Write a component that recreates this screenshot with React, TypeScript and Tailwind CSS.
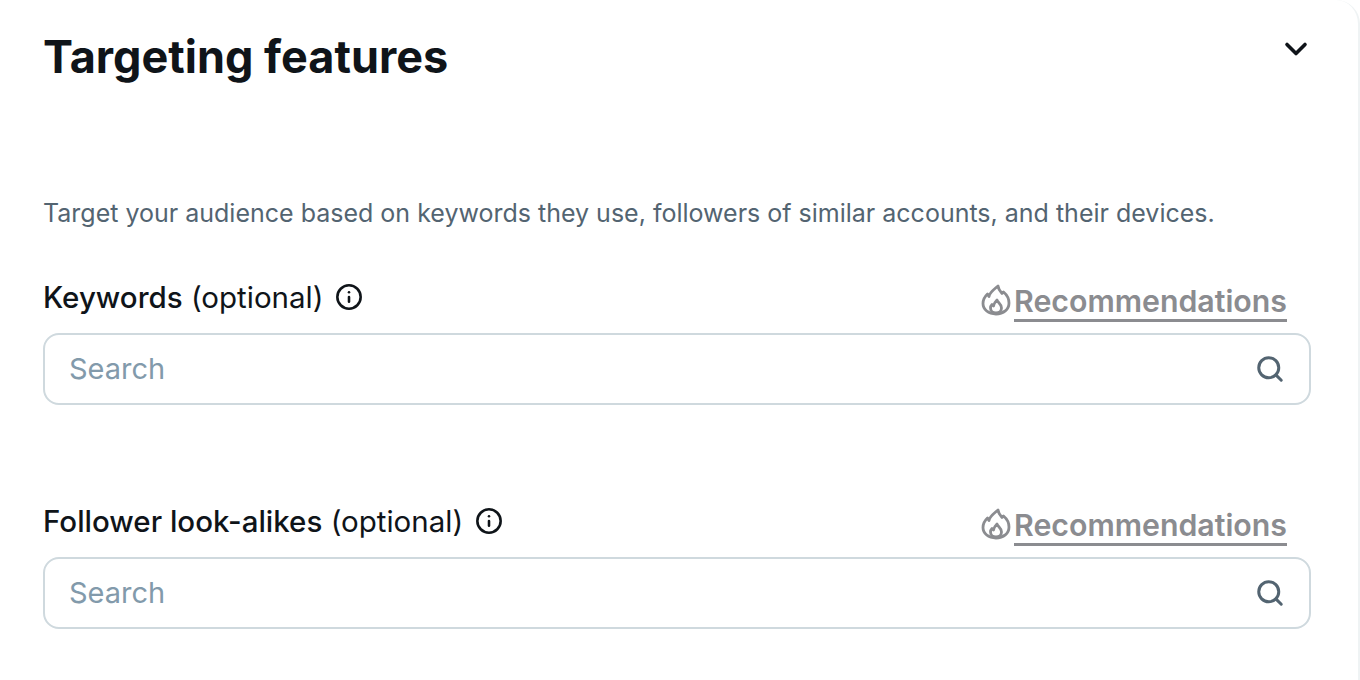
import React from "react";
import { ChevronDown, Info, Search } from "lucide-react";

const FlameIcon = () => (
  <svg width="30" height="32" viewBox="0 0 30 32" fill="none" stroke="#8b8c90" strokeWidth="2.8" strokeLinejoin="round" strokeLinecap="round">
    <path d="M17 2c.5 3.500 2 5 4 7.500l1.500-1.500c3 2.500 5.500 6.500 5.500 11 0 6.500-5.500 11-13 11S2 25.500 2 19.500c0-4 1.800-7 4.500-9.500l1.500 2.500C8.500 8.500 13 5.500 17 2z" />
    <path d="M16 16c.5 2.500 4.500 4 4.500 8 0 2.800-2.500 5-5.500 5s-5.500-2.200-5.500-5c0-1.500.7-2.700 1.500-3.500l1.500 1.500c.5-2.500 2-4.500 3.500-6z" />
  </svg>
);

const Field = ({ label, gap }: { label: string; gap: string }) => (
  <div className={gap}>
    <div className="flex h-[53px] items-start justify-between pr-[24px]">
      <div className="flex items-center pt-[2px]">
        <span className="text-[29.500px] leading-[34px] text-[#0f1419]">
          <span className="font-medium">{label}</span> (optional)
        </span>
        <Info className="ml-[12px] h-[28px] w-[28px] text-[#0f1419]" strokeWidth={2.2} />
      </div>
      <div className="flex items-start pt-[6px]">
        <FlameIcon />
        <span className="ml-[3px] border-b-[3px] border-[#8b8c90] text-[30.300px] font-semibold leading-[35px] text-[#8b8c90]">
          Recommendations
        </span>
      </div>
    </div>
    <div className="mt-[2px] flex h-[72px] items-center justify-between rounded-[16px] border-2 border-[#cfd9de] pl-[24px] pr-[24px]">
      <span className="text-[29px] text-[#829aab]">Search</span>
      <Search className="h-[30px] w-[30px] text-[#536471]" strokeWidth={2.4} />
    </div>
  </div>
);

export default function App() {
  return (
    <div className="h-[680px] w-[1360px] overflow-hidden bg-white font-['Inter',sans-serif]">
      <div className="h-[760px] rounded-tr-[24px] border-r-2 border-[#eff3f4] pl-[43px] pr-[47px] pt-[27px]">
        <div className="flex items-start justify-between">
          <h2 className="text-[45px] font-bold leading-[60px] text-[#0f1419]">Targeting features</h2>
          <ChevronDown className="mr-[-3px] mt-[4px] h-[36px] w-[36px] text-[#0f1419]" strokeWidth={2.4} />
        </div>
        <p className="mt-[110px] text-[25px] leading-[32px] text-[#536471]">
          Target your audience based on keywords they use, followers of similar accounts, and their devices.
        </p>
        <Field label="Keywords" gap="mt-[49px]" />
        <Field label="Follower look-alikes" gap="mt-[97px]" />
      </div>
    </div>
  );
}
